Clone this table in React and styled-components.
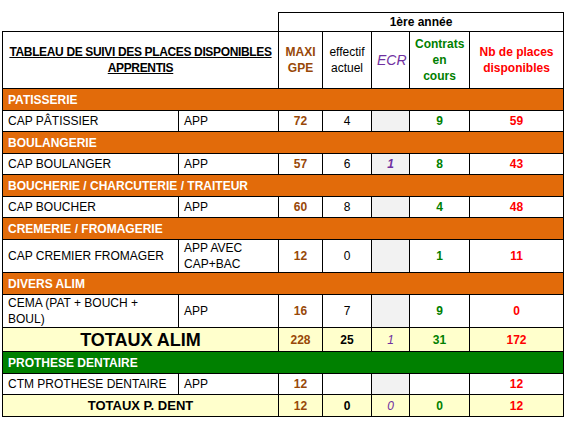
import React from "react";
import styled, { createGlobalStyle } from "styled-components";

const Global = createGlobalStyle`
  html, body { margin: 0; padding: 0; background: #fff; }
  body { font-family: "Liberation Sans", Arial, sans-serif; }
`;

const Page = styled.div`
  padding: 12px 0 0 2px;
`;

const Table = styled.table`
  border-collapse: collapse;
  table-layout: fixed;
  width: 561px;
  font-family: "Liberation Sans", Arial, sans-serif;
  font-size: 12px;
  color: #000;
`;

const Cell = styled.td`
  border: 1px solid #000;
  padding: 0 5px;
  height: ${(p) => p.$h || 20}px;
  line-height: 16px;
  text-align: ${(p) => p.$align || "center"};
  vertical-align: middle;
  background: ${(p) => (p.$gray ? "#f2f2f2" : p.$yellow ? "#ffffcc" : "#fff")};
  color: ${(p) => p.$color || "#000"};
  font-weight: ${(p) => (p.$bold ? "bold" : "normal")};
  font-style: ${(p) => (p.$italic ? "italic" : "normal")};
  font-size: ${(p) => p.$size || 12}px;
  overflow: hidden;
`;

const TitleCell = styled.td`
  border: 1px solid #000;
  padding: 0;
  height: 56px;
  text-align: center;
  vertical-align: middle;
  line-height: 16px;
  white-space: nowrap;
`;

const Blank = styled.td`
  border: none;
  padding: 0;
`;

const TitleText = styled.span`
  text-decoration: underline;
  font-weight: bold;
  letter-spacing: -0.35px;
`;

const Band = styled.td`
  border: 1px solid #000;
  background: ${(p) => p.$bg};
  color: #fff;
  font-weight: bold;
  height: 21px;
  padding: 0 5px;
  text-align: left;
  line-height: 16px;
`;

const C = {
  maxi: "#984807",
  ecr: "#7030a0",
  contrats: "#008000",
  nb: "#ff0000",
};

const ORANGE = "#e26b0a";
const GREEN = "#008000";

function DataRow({ label, type, maxi, eff, ecr, contrats, nb, h = 20 }) {
  return (
    <tr>
      <Cell $align="left" $h={h}>{label}</Cell>
      <Cell $align="left" $h={h}>{type}</Cell>
      <Cell $bold $color={C.maxi}>{maxi}</Cell>
      <Cell>{eff}</Cell>
      <Cell $gray $italic $bold $color={C.ecr}>{ecr}</Cell>
      <Cell $bold $color={C.contrats}>{contrats}</Cell>
      <Cell $bold $color={C.nb}>{nb}</Cell>
    </tr>
  );
}

function TotalRow({ label, size, maxi, eff, ecr, contrats, nb, h }) {
  return (
    <tr>
      <Cell $yellow colSpan={2} $bold $size={size} $h={h}>{label}</Cell>
      <Cell $yellow $bold $color={C.maxi}>{maxi}</Cell>
      <Cell $yellow $bold>{eff}</Cell>
      <Cell $yellow $italic $color={C.ecr}>{ecr}</Cell>
      <Cell $yellow $bold $color={C.contrats}>{contrats}</Cell>
      <Cell $yellow $bold $color={C.nb}>{nb}</Cell>
    </tr>
  );
}

function BandRow({ label, bg = ORANGE }) {
  return (
    <tr>
      <Band colSpan={7} $bg={bg}>{label}</Band>
    </tr>
  );
}

export default function App() {
  return (
    <Page>
      <Global />
      <Table>
        <colgroup>
          <col style={{ width: 176 }} />
          <col style={{ width: 100 }} />
          <col style={{ width: 44 }} />
          <col style={{ width: 49 }} />
          <col style={{ width: 38 }} />
          <col style={{ width: 60 }} />
          <col style={{ width: 94 }} />
        </colgroup>
        <thead>
          <tr>
            <Blank colSpan={2} />
            <Cell colSpan={5} $bold $h={18}>1ère année</Cell>
          </tr>
          <tr>
            <TitleCell colSpan={2}>
              <TitleText>TABLEAU DE SUIVI DES PLACES DISPONIBLES<br />APPRENTIS</TitleText>
            </TitleCell>
            <Cell $bold $color={C.maxi}>MAXI GPE</Cell>
            <Cell>effectif actuel</Cell>
            <Cell $italic $color={C.ecr} $size={14}>ECR</Cell>
            <Cell $bold $color={C.contrats}>Contrats en cours</Cell>
            <Cell $bold $color={C.nb}>Nb de places disponibles</Cell>
          </tr>
        </thead>
        <tbody>
          <BandRow label="PATISSERIE" />
          <DataRow label="CAP PÂTISSIER" type="APP" maxi="72" eff="4" ecr="" contrats="9" nb="59" />
          <BandRow label="BOULANGERIE" />
          <DataRow label="CAP BOULANGER" type="APP" maxi="57" eff="6" ecr="1" contrats="8" nb="43" />
          <BandRow label="BOUCHERIE / CHARCUTERIE / TRAITEUR" />
          <DataRow label="CAP BOUCHER" type="APP" maxi="60" eff="8" ecr="" contrats="4" nb="48" />
          <BandRow label="CREMERIE / FROMAGERIE" />
          <DataRow label="CAP CREMIER FROMAGER" type={<>APP AVEC<br />CAP+BAC</>} maxi="12" eff="0" ecr="" contrats="1" nb="11" h={31} />
          <BandRow label="DIVERS ALIM" />
          <DataRow label={<>CEMA (PAT + BOUCH +<br />BOUL)</>} type="APP" maxi="16" eff="7" ecr="" contrats="9" nb="0" h={31} />
          <TotalRow label="TOTAUX ALIM" size={18} h={23} maxi="228" eff="25" ecr="1" contrats="31" nb="172" />
          <BandRow label="PROTHESE DENTAIRE" bg={GREEN} />
          <DataRow label="CTM PROTHESE DENTAIRE" type="APP" maxi="12" eff="" ecr="" contrats="" nb="12" />
          <TotalRow label="TOTAUX P. DENT" size={13} h={21} maxi="12" eff="0" ecr="0" contrats="0" nb="12" />
        </tbody>
      </Table>
    </Page>
  );
}
